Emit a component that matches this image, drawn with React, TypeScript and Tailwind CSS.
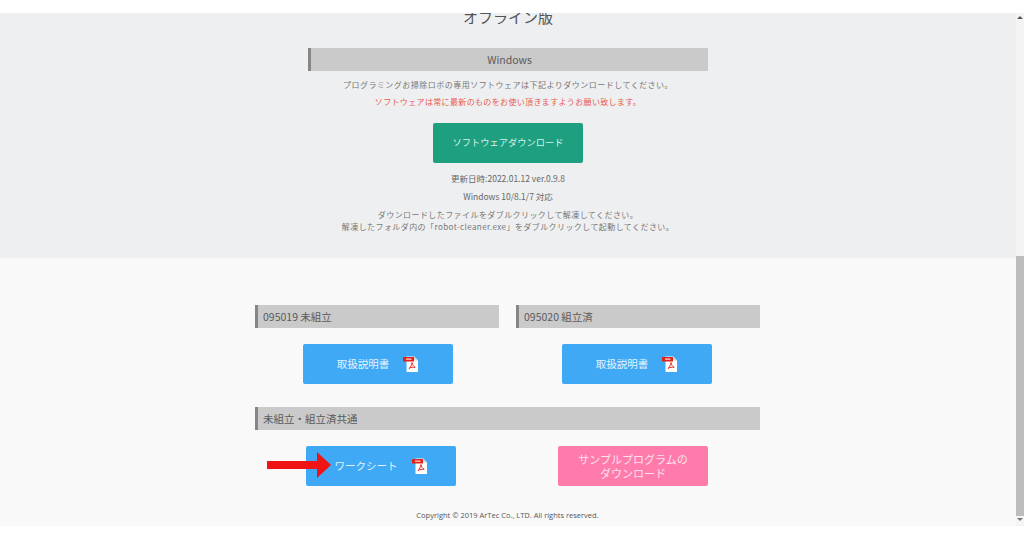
const jp = "font-['Noto_Sans_CJK_JP','Noto_Sans',sans-serif]";

function PdfIcon() {
  return (
    <svg width="16" height="16" viewBox="0 0 16 16" className="shrink-0">
      <path d="M3.5 0.5h7.5L15 4.5V16H3.5z" fill="#fdfdfd" />
      <path d="M11 0.5v4h4z" fill="#d8d8d8" />
      <rect x="0" y="1" width="11" height="4.5" fill="#e0231c" />
      <rect x="3" y="2.4" width="5.5" height="1.5" fill="#ffb5a8" />
      <path d="M9 6.5c-.4 2.4-1.6 5-3 6.4M9 6.5c.4 2.2 1.4 4 3.2 4.7M6 12.2c1.8-.8 4-1.1 6.2-.8" fill="none" stroke="#e0352c" strokeWidth="1" />
    </svg>
  );
}

function Heading({ children, center }: { children: string; center?: boolean }) {
  return (
    <div className={`h-[23px] flex items-center bg-[#cacaca] border-l-[3px] border-[#868686] text-[#5a5a5a] ${center ? "justify-center text-[10.5px]" : "pl-[5px] text-[10.5px]"}`}>
      {children}
    </div>
  );
}

function DocButton({ label, className }: { label: string; className: string }) {
  return (
    <div className={`w-[150px] h-10 flex items-center justify-center gap-[14px] rounded-[2px] bg-[#3fa9f5] text-[#e2f2ff] text-[10.5px] ${className}`}>
      <span>{label}</span>
      <PdfIcon />
    </div>
  );
}

export default function App() {
  return (
    <div className={`relative h-[538px] w-[1024px] overflow-hidden bg-white pt-[13px] ${jp}`}>
      <div className="flex h-[513px]">
        <main className="flex-1 min-w-0">
          {/* Offline section */}
          <section className="h-[245px] bg-[#eeeff0] flex flex-col items-center overflow-hidden">
            <h2 className="-mt-[8px] h-[24px] leading-[24px] text-[15px] text-[#555]">オフライン版</h2>
            <div className="w-[400px] mt-[19px]">
              <Heading center>Windows</Heading>
            </div>
            <p className="mt-[7px] leading-[14px] text-[8px] tracking-[0.48px] text-[#777]">
              プログラミングお掃除ロボの専用ソフトウェアは下記よりダウンロードしてください。
            </p>
            <p className="mt-[3px] leading-[14px] text-[8px] tracking-[0.35px] text-[#ea5a50]">
              ソフトウェアは常に最新のものをお使い頂きますようお願い致します。
            </p>
            <div className="mt-[14px] w-[150px] h-10 flex items-center justify-center rounded-[2px] bg-[#1e9f7f] text-[#d9f1ea] text-[9.25px]">
              ソフトウェアダウンロード
            </div>
            <p className="mt-[8px] leading-[14px] text-[8.5px] text-[#666]">更新日時:2022.01.12 ver.0.9.8</p>
            <p className="mt-[4px] leading-[14px] text-[8.5px] text-[#666]">Windows 10/8.1/7 対応</p>
            <p className="mt-[6px] leading-[12px] text-[8px] tracking-[0.42px] text-[#777] text-center">
              ダウンロードしたファイルをダブルクリックして解凍してください。
              <br />
              解凍したフォルダ内の「robot-cleaner.exe」をダブルクリックして起動してください。
            </p>
          </section>

          {/* Manuals section */}
          <section className="h-[268px] bg-[#f9f9f9] pt-[47px] pr-px flex flex-col items-center">
            <div className="w-[505px]">
              <div className="grid grid-cols-[244px_244px] gap-x-[17px]">
                <Heading>095019 未組立</Heading>
                <Heading>095020 組立済</Heading>
              </div>
              <div className="flex mt-[16px]">
                <DocButton label="取扱説明書" className="ml-[48px]" />
                <DocButton label="取扱説明書" className="ml-[109px]" />
              </div>
              <div className="mt-[23px]">
                <Heading>未組立・組立済共通</Heading>
              </div>
              <div className="flex mt-[16px]">
                <DocButton label="ワークシート" className="ml-[51px]" />
                <div className="ml-[102px] w-[150px] h-10 flex items-center justify-center text-center rounded-[2px] bg-[#ff7bac] text-[#ffe3ee] text-[11px] leading-[14px]">
                  サンプルプログラムの
                  <br />
                  ダウンロード
                </div>
              </div>
            </div>
            <p className="mt-[23px] text-[7.5px] leading-[12px] text-[#555] font-['Open_Sans',sans-serif]">
              Copyright © 2019 ArTec Co., LTD. All rights reserved.
            </p>
          </section>
        </main>

        {/* Scrollbar */}
        <div className="w-2 relative bg-[#f4f4f4] flex flex-col items-center">
          <span className="mt-[3px] w-0 h-0 border-x-[3px] border-x-transparent border-b-[3px] border-b-[#555]" />
          <div className="absolute top-[243px] left-0 right-0 h-[260px] bg-[#bdbdbd]" />
          <span className="mt-auto mb-[5px] w-0 h-0 border-x-[3px] border-x-transparent border-t-[3px] border-t-[#777]" />
        </div>
      </div>

      {/* Red annotation arrow */}
      <svg width="64" height="26" viewBox="0 0 64 26" className="absolute left-[267px] top-[452px]">
        <path d="M0 9h50V0l14 13-14 13v-9H0z" fill="#f01414" />
      </svg>
    </div>
  );
}
